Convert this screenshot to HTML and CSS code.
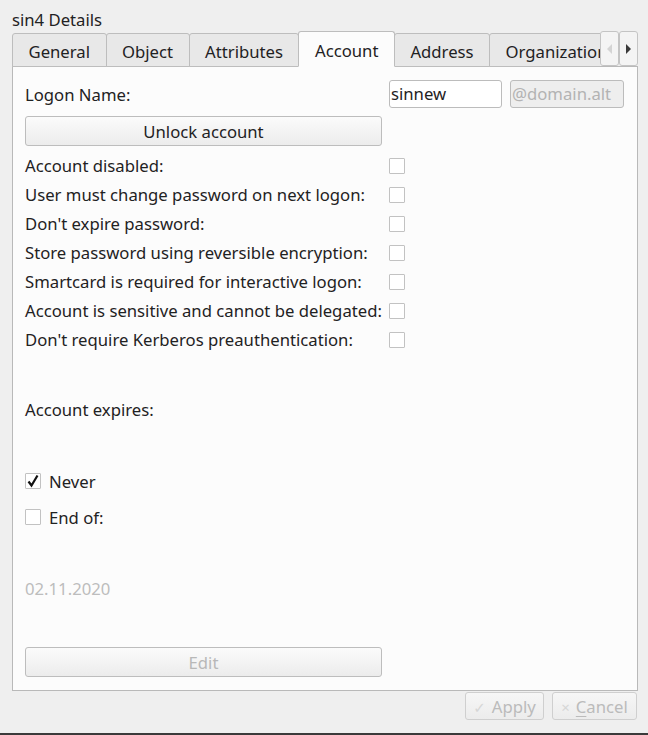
FILE: index.html
```html
<!DOCTYPE html>
<html>
<head>
<meta charset="utf-8">
<link rel="stylesheet" href="styles.css">
</head>
<body>
<div class="window">
  <div class="title">sin4 Details</div>
  <div class="tabbar">
    <div class="tabs">
      <div class="tab">General</div>
      <div class="tab">Object</div>
      <div class="tab">Attributes</div>
      <div class="tab active">Account</div>
      <div class="tab">Address</div>
      <div class="tab">Organization</div>
    </div>
    <div class="scroll-btn">
      <svg width="6" height="10" viewBox="0 0 6 10"><path d="M5 0 L0 5 L5 10 Z" fill="#d4d4d4"/></svg>
    </div>
    <div class="scroll-btn">
      <svg width="6" height="10" viewBox="0 0 6 10"><path d="M0 0 L5 5 L0 10 Z" fill="#3a3a3a"/></svg>
    </div>
  </div>
  <div class="panel">
    <div class="logon-row">
      <span class="label">Logon Name:</span>
      <div class="input">sinnew</div>
      <div class="input disabled">@domain.alt</div>
    </div>
    <div class="button wide">Unlock account</div>
    <div class="checks">
      <div class="check-row"><span>Account disabled:</span><span class="box"></span></div>
      <div class="check-row"><span>User must change password on next logon:</span><span class="box"></span></div>
      <div class="check-row"><span>Don't expire password:</span><span class="box"></span></div>
      <div class="check-row"><span>Store password using reversible encryption:</span><span class="box"></span></div>
      <div class="check-row"><span>Smartcard is required for interactive logon:</span><span class="box"></span></div>
      <div class="check-row"><span>Account is sensitive and cannot be delegated:</span><span class="box"></span></div>
      <div class="check-row"><span>Don't require Kerberos preauthentication:</span><span class="box"></span></div>
    </div>
    <div class="expires">Account expires:</div>
    <div class="radio-row never">
      <span class="box checked"><svg width="14" height="14" viewBox="0 0 14 14"><path d="M2.5 7.5 L5.5 11.5 L11.5 1.5" fill="none" stroke="#111" stroke-width="2.2"/></svg></span>
      <span>Never</span>
    </div>
    <div class="radio-row endof">
      <span class="box"></span>
      <span>End of:</span>
    </div>
    <div class="date">02.11.2020</div>
    <div class="button wide disabled-btn edit">Edit</div>
  </div>
  <div class="footer">
    <div class="button foot apply"><span class="ico">✓</span>Apply</div>
    <div class="button foot cancel"><span class="ico">×</span><u>C</u>ancel</div>
  </div>
  <div class="bottom-line"></div>
</div>
</body>
</html>
```

FILE: styles.css
```css
* { box-sizing: border-box; }
html, body { margin: 0; padding: 0; }
body {
  background: #efefef;
  font-family: "Noto Sans", "DejaVu Sans", sans-serif;
  font-size: 16.7px;
  color: #1f2223;
  width: 648px;
  height: 735px;
  overflow: hidden;
}
.window {
  display: flex;
  flex-direction: column;
  height: 735px;
}
.title {
  height: 31px;
  padding-left: 12px;
  line-height: 22px;
  padding-top: 9px;
}
.tabbar {
  display: flex;
  align-items: flex-end;
  height: 36px;
  margin-left: 12px;
  margin-right: 10px;
  position: relative;
  z-index: 2;
  margin-bottom: -1px;
}
.tabs {
  display: flex;
  align-items: flex-end;
  width: 588px;
  overflow: hidden;
  height: 36px;
}
.tab {
  flex: none;
  height: 34px;
  padding: 0 15.5px;
  line-height: 35px;
  background: #e8e8e8;
  border: 1px solid #bdbdbd;
  border-radius: 3px 3px 0 0;
  margin-right: -1px;
  white-space: nowrap;
}
.tab.active {
  height: 36px;
  line-height: 37px;
  background: #fcfcfc;
  border-bottom-color: #fcfcfc;
  position: relative;
  z-index: 1;
}
.scroll-btn {
  flex: none;
  width: 19px;
  height: 35px;
  border: 1px solid #c4c4c4;
  border-radius: 3px;
  background: #f4f4f4;
  display: flex;
  align-items: center;
  justify-content: center;
  align-self: flex-start;
}
.panel {
  margin: 0 10px 0 12px;
  height: 625px;
  background: #fcfcfc;
  border: 1px solid #b9b9b9;
  padding: 13px 12px 12px 12px;
  display: flex;
  flex-direction: column;
}
.logon-row {
  display: grid;
  grid-template-columns: 356px 113px 114px;
  column-gap: 8px;
  align-items: center;
  height: 28px;
}
.input {
  height: 28px;
  border: 1px solid #bcbcbc;
  border-radius: 3px;
  background: #ffffff;
  line-height: 26px;
  padding-left: 1px;
  white-space: nowrap;
  overflow: hidden;
}
.input.disabled {
  background: #eeeeee;
  color: #b3b3b3;
}
.button {
  border: 1px solid #bdbdbd;
  border-radius: 3px;
  background: linear-gradient(#fbfbfb, #ececec);
  text-align: center;
}
.button.wide {
  width: 357px;
  height: 30px;
  line-height: 30px;
  margin-top: 8px;
}
.checks {
  margin-top: 5px;
  display: flex;
  flex-direction: column;
}
.check-row {
  display: grid;
  grid-template-columns: 364px 16px;
  align-items: center;
  height: 29px;
  white-space: nowrap;
}
.box {
  width: 16px;
  height: 16px;
  border: 1px solid #c2c2c2;
  border-radius: 1px;
  background: #ffffff;
  display: inline-flex;
  align-items: center;
  justify-content: center;
}
.expires {
  margin-top: 45px;
  height: 22px;
  line-height: 22px;
}
.radio-row {
  display: flex;
  align-items: center;
  gap: 8px;
  height: 22px;
}
.radio-row.never { margin-top: 49px; }
.radio-row.endof { margin-top: 14px; }
.date {
  margin-top: 50px;
  height: 22px;
  line-height: 22px;
  color: #bdbdbd;
}
.disabled-btn { color: #b8b8b8; }
.button.edit { margin-top: 47px; }
.footer {
  display: flex;
  justify-content: flex-end;
  gap: 8px;
  margin-right: 11px;
  margin-top: 1px;
  height: 28px;
}
.button.foot {
  height: 28px;
  line-height: 28px;
  color: #bbbbbb;
  border-color: #cfcfcf;
  background: linear-gradient(#f6f6f6, #ececec);
  padding: 0 4px;
  white-space: nowrap;
}
.apply { width: 79px; }
.cancel { width: 85px; }
.ico {
  font-size: 15px;
  color: #d6d6d6;
  margin-right: 6px;
}
.foot u { text-decoration-thickness: 1px; text-underline-offset: 3px; }
.bottom-line {
  margin-top: auto;
  height: 2px;
  background: #3a3a3a;
}
```
